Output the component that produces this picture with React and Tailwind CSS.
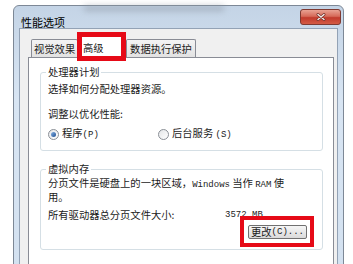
import React from "react";

const Radio = ({ checked }) => (
  <span className="w-[11px] h-[11px] rounded-full border border-[#8a8f96] bg-gradient-to-br from-[#e4e6e8] to-[#ffffff] flex items-center justify-center shrink-0">
    {checked && (
      <span className="w-[5px] h-[5px] rounded-full bg-gradient-to-br from-[#86b3e6] to-[#1f4f91]" />
    )}
  </span>
);

const Key = ({ children }) => (
  <span className="font-['Liberation_Mono',monospace] text-[9px]">{children}</span>
);

// group box: label sits on the top border
const Group = ({ label, className, boxClass, children }) => (
  <div className={"flex flex-col " + className}>
    <span className="relative z-10 self-start ml-[6px] px-[2px] bg-white leading-[12px]">{label}</span>
    <div className={"-mt-[6px] border border-[#d5dfe5] rounded-[3px] " + boxClass}>{children}</div>
  </div>
);

const App = () => {
  return (
    <div className="w-[353px] h-[264px] overflow-hidden bg-white font-['Noto_Sans_CJK_SC',sans-serif] text-[10.3px] leading-[12px] text-[#1b1b1b]">
      {/* WINDOW */}
      <div className="relative ml-[13px] mt-[5px] w-[331px] h-[270px] rounded-t-[6px] border border-[#7d8896] bg-[linear-gradient(180deg,#c4d4e6_0%,#d8e5f3_35%,#d3e1f0_100%)] px-[5px] flex flex-col">
        {/* glass streak */}
        <div className="absolute left-[70px] top-0 w-[140px] h-[5px] bg-[#8e98a4] blur-[3px] opacity-60" />

        {/* TITLE BAR */}
        <div className="h-[25px] flex justify-between items-start">
          <span className="mt-[10px] ml-[2px] text-[11px] leading-[12px] text-black">性能选项</span>
          <div className="mt-[3px] -mr-[3px] w-[41px] h-[16px] rounded-[3px] border border-[#7e3a32] bg-[#c9483a] bg-[linear-gradient(180deg,#e9a293_0%,#d66a59_45%,#c13a2c_55%,#d45b45_100%)] flex items-center justify-center">
            <svg width="10" height="8" viewBox="0 0 10 8">
              <path d="M2 1.5 L8 6.5 M8 1.5 L2 6.5" stroke="#6b2a22" strokeWidth="2.8" strokeLinecap="round" />
              <path d="M2 1.5 L8 6.5 M8 1.5 L2 6.5" stroke="#f4ecea" strokeWidth="1.5" strokeLinecap="round" />
            </svg>
          </div>
        </div>

        {/* BODY */}
        <div className="flex-1 bg-[#f0f0f0] border border-[#93a2b5] pt-[3px] pl-[8px] pr-[3px]">
          {/* TABS */}
          <div className="flex items-end pl-[3px]">
            <div className="w-[47px] h-[18px] border border-b-0 border-[#898c95] rounded-t-[2px] bg-gradient-to-b from-[#f4f4f4] to-[#e2e2e2] pl-[2px] flex items-center">
              视觉效果
            </div>
            <div className="relative z-10 -ml-[1px] -mb-[4px] w-[49px] h-[29px] border-[5px] border-[#e60a17] bg-white pt-[5px] pl-[1px]">
              高级
            </div>
            <div className="w-[70px] h-[18px] border border-b-0 border-[#898c95] rounded-t-[2px] bg-gradient-to-b from-[#f4f4f4] to-[#e2e2e2] flex items-center justify-center">
              数据执行保护
            </div>
          </div>

          {/* PANEL */}
          <div className="h-[220px] bg-white border border-[#898c95] pl-[11px] pr-[10px] pt-[8px]">
            {/* PROCESSOR */}
            <Group label="处理器计划" className="" boxClass="pl-[7px] pr-[7px] pt-[10px] pb-[9px]">
              <p>选择如何分配处理器资源。</p>
              <p className="mt-[13px]">调整以优化性能:</p>
              <div className="mt-[7px] flex items-center">
                <div className="w-[110px] flex items-center gap-[3px]">
                  <Radio checked />
                  <span>程序<Key>(P)</Key></span>
                </div>
                <div className="flex items-center gap-[3px]">
                  <Radio />
                  <span>后台服务 <Key>(S)</Key></span>
                </div>
              </div>
            </Group>

            {/* VIRTUAL MEMORY */}
            <Group label="虚拟内存" className="mt-[12px]" boxClass="pl-[7px] pr-[8px] pt-[7px] pb-[2px]">
              <p className="leading-[11px] whitespace-nowrap">
                分页文件是硬盘上的一块区域，<Key>Windows</Key> 当作 <Key>RAM</Key> 使
                <br />
                用。
              </p>
              <div className="mt-[7px] flex">
                <span className="w-[177px]">所有驱动器总分页文件大小:</span>
                <Key>3572 MB</Key>
              </div>
              <div className="-mt-[5px] flex justify-end">
                <div className="border-[4px] border-[#e60a17] pl-[4px] pr-[3px] pt-[5px] pb-[4px]">
                  <div className="w-[59px] h-[14px] border border-[#707070] rounded-[2px] bg-gradient-to-b from-[#f6f6f6] to-[#dadada] flex items-center justify-center leading-[12px]">
                    更改<Key>(C)...</Key>
                  </div>
                </div>
              </div>
            </Group>
          </div>
        </div>
      </div>
    </div>
  );
};

export default App;
